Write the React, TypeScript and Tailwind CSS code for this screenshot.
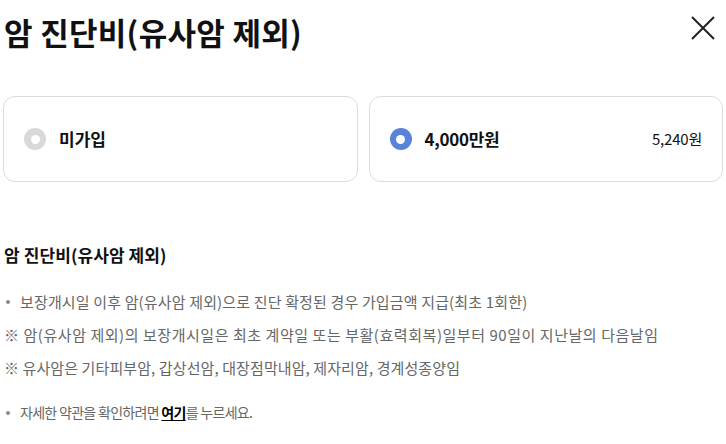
import React from "react";

export default function App() {
  const font = { fontFamily: '"Noto Sans CJK KR", "Noto Sans", sans-serif' };
  return (
    <div className="w-[726px] h-[444px] bg-white overflow-hidden relative text-[#111]" style={font}>
      <div className="flex items-start justify-between pl-[4px] pr-[10px] pt-[10px]">
        <h1 className="text-[31px] font-bold leading-[44px] tracking-[0.3px]">암 진단비(유사암 제외)</h1>
        <button className="mt-[5px] w-[26px] h-[26px] flex items-center justify-center">
          <svg width="24" height="24" viewBox="0 0 24 24" fill="none" stroke="#222" strokeWidth="2">
            <path d="M1 1 L23 23 M23 1 L1 23" />
          </svg>
        </button>
      </div>

      <div className="flex gap-[11px] px-[3px] mt-[42px]">
        <div className="flex-1 h-[86px] border border-[#dcdcdc] rounded-[12px] flex items-center px-[20px]">
          <span className="w-[22px] h-[22px] rounded-full bg-[#d9d9dc] flex items-center justify-center">
            <span className="w-[9px] h-[9px] rounded-full bg-white" />
          </span>
          <span className="ml-[13px] text-[17px] font-bold">미가입</span>
        </div>
        <div className="flex-1 h-[86px] border border-[#dcdcdc] rounded-[12px] flex items-center pl-[20px] pr-[20px]">
          <span className="w-[22px] h-[22px] rounded-full bg-[#5b82d9] flex items-center justify-center">
            <span className="w-[9px] h-[9px] rounded-full bg-white" />
          </span>
          <span className="ml-[13px] text-[17px] font-bold tracking-[-0.3px]">4,000만원</span>
          <span className="ml-auto text-[15px] tracking-[-0.2px]">5,240원</span>
        </div>
      </div>

      <div className="px-[4px] mt-[60px]">
        <h2 className="text-[17px] font-bold leading-[26px] tracking-[0.1px]">암 진단비(유사암 제외)</h2>
        <div className="mt-[17px] text-[15px] text-[#666] leading-[33px] tracking-[0.15px]">
          <div className="flex items-center">
            <span className="w-[4px] h-[4px] rounded-full bg-[#888] ml-[2px] mr-[10px]" />
            <span>보장개시일 이후 암(유사암 제외)으로 진단 확정된 경우 가입금액 지급(최초 1회한)</span>
          </div>
          <div className="tracking-[0.55px]">※ 암(유사암 제외)의 보장개시일은 최초 계약일 또는 부활(효력회복)일부터 90일이 지난날의 다음날임</div>
          <div className="tracking-[0.1px]">※ 유사암은 기타피부암, 갑상선암, 대장점막내암, 제자리암, 경계성종양임</div>
        </div>
        <div className="mt-[18px] flex items-center text-[14px] text-[#666] tracking-[-0.7px]">
          <span className="w-[4px] h-[4px] rounded-full bg-[#888] ml-[2px] mr-[10px]" />
          <span>
            자세한 약관을 확인하려면 <span className="font-bold text-black underline underline-offset-2">여기</span>를 누르세요.
          </span>
        </div>
      </div>
    </div>
  );
}
